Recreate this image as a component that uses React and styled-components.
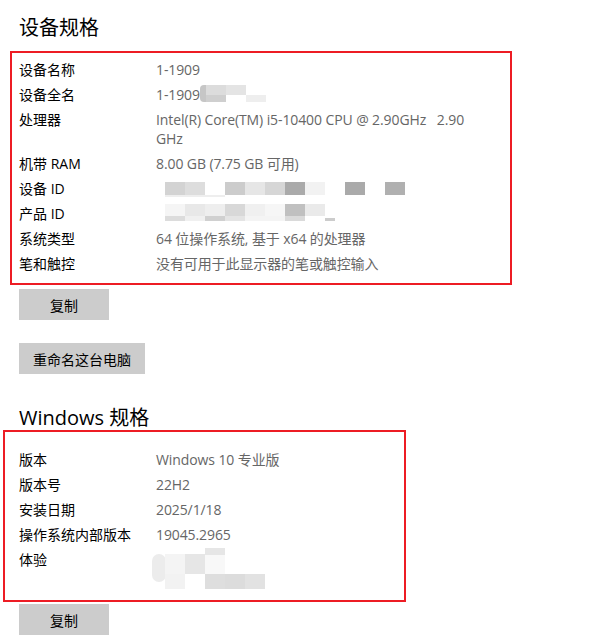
import React from 'react';
import styled, { createGlobalStyle } from 'styled-components';

const GlobalStyle = createGlobalStyle`
  body {
    margin: 0;
    background: #ffffff;
    font-family: 'Open Sans', 'Noto Sans CJK SC', sans-serif;
    font-size: 14px;
    color: #000000;
  }
`;

const Page = styled.div`
  width: 592px;
  height: 641px;
  box-sizing: border-box;
  padding: 14px 0 0 19px;
  overflow: hidden;
`;

const Heading = styled.h2`
  margin: ${(p) => p.margin};
  font-size: 20px;
  font-weight: 400;
  line-height: ${(p) => p.lh}px;
  color: #000000;
`;

const Frame = styled.div`
  box-sizing: border-box;
  width: ${(p) => p.w}px;
  margin-left: ${(p) => p.shift}px;
  padding: ${(p) => p.pad};
  border: 2px solid #ed1c24;
  display: flex;
  flex-direction: column;
  gap: 6px;
`;

const Row = styled.div`
  display: flex;
  align-items: flex-start;
  line-height: 19px;
`;

const Label = styled.div`
  flex: 0 0 137px;
  color: #000000;
  white-space: nowrap;
`;

const Value = styled.div`
  max-width: 322px;
  color: #666666;
  display: flex;
  align-items: flex-start;
  letter-spacing: -0.1px;
`;

const Button = styled.button`
  display: block;
  height: 31px;
  min-width: 90px;
  margin-top: ${(p) => p.top}px;
  padding: 0 14px;
  border: none;
  background: #cccccc;
  color: #000000;
  font-family: inherit;
  font-size: 14px;
`;

const Blur = styled.svg`
  display: block;
  flex: none;
  overflow: visible;
`;

// redaction mosaic: [x, y, w, h, fill, radius]
const fullNameBlocks = [
  [0, 0, 10, 17, '#c6c6c6', 4],
  [6, 0, 20, 10, '#dcdcdc'],
  [6, 10, 20, 7, '#cfcfcf'],
  [26, 0, 20, 10, '#e4e4e4'],
  [46, 10, 20, 7, '#eeeeee'],
];

const deviceIdBlocks = [
  [9, 3, 20, 13, '#d3d3d3'],
  [29, 3, 20, 13, '#dddddd'],
  [69, 3, 20, 13, '#cccccc'],
  [89, 3, 20, 13, '#e6e6e6'],
  [109, 3, 20, 13, '#d6d6d6'],
  [129, 3, 20, 13, '#aaaaaa'],
  [149, 3, 20, 13, '#f2f2f2'],
  [189, 3, 20, 13, '#aaaaaa'],
  [229, 3, 20, 13, '#b0b0b0'],
  [9, 16, 60, 2, '#eeeeee'],
];

const productIdBlocks = [
  [9, 0, 20, 12, '#f5f5f5'],
  [29, 0, 20, 12, '#e8e8e8'],
  [49, 0, 20, 12, '#eeeeee'],
  [69, 0, 20, 12, '#d8d8d8'],
  [89, 0, 20, 12, '#f0f0f0'],
  [109, 0, 20, 12, '#f6f6f6'],
  [129, 0, 20, 12, '#c0c0c0'],
  [149, 0, 20, 12, '#eaeaea'],
  [9, 12, 20, 5, '#dcdcdc'],
  [29, 12, 20, 5, '#f0f0f0'],
  [49, 12, 20, 5, '#d0d0d0'],
  [69, 12, 20, 5, '#e4e4e4'],
  [89, 12, 40, 5, '#f4f4f4'],
  [129, 12, 20, 5, '#dadada'],
  [169, 14, 10, 3, '#cccccc'],
];

const experienceBlocks = [
  [-4, 4, 14, 28, '#ececec', 7],
  [9, 4, 20, 20, '#f4f4f4'],
  [29, 4, 20, 20, '#e6e6e6'],
  [49, -2, 20, 7, '#e6e6e6'],
  [49, 5, 20, 19, '#f8f8f8'],
  [9, 24, 20, 15, '#f2f2f2'],
  [49, 24, 20, 15, '#dedede'],
  [69, 24, 20, 15, '#dcdcdc'],
  [89, 24, 20, 15, '#e2e2e2'],
];

const Mosaic = ({ blocks, width, height }) => (
  <Blur width={width} height={height} viewBox={`0 0 ${width} ${height}`}>
    {blocks.map(([x, y, w, h, fill, r]) => (
      <rect key={`${x}-${y}`} x={x} y={y} width={w} height={h} fill={fill} rx={r || 0} />
    ))}
  </Blur>
);

const deviceSpecs = [
  { label: '设备名称', value: '1-1909' },
  { label: '设备全名', value: '1-1909', blur: fullNameBlocks, bw: 70 },
  { label: '处理器', value: 'Intel(R) Core(TM) i5-10400 CPU @ 2.90GHz   2.90 GHz' },
  { label: '机带 RAM', value: '8.00 GB (7.75 GB 可用)' },
  { label: '设备 ID', blur: deviceIdBlocks, bw: 250 },
  { label: '产品 ID', blur: productIdBlocks, bw: 180 },
  { label: '系统类型', value: '64 位操作系统, 基于 x64 的处理器' },
  { label: '笔和触控', value: '没有可用于此显示器的笔或触控输入' },
];

const windowsSpecs = [
  { label: '版本', value: 'Windows 10 专业版' },
  { label: '版本号', value: '22H2' },
  { label: '安装日期', value: '2025/1/18' },
  { label: '操作系统内部版本', value: '19045.2965' },
  { label: '体验', blur: experienceBlocks, bw: 110 },
];

const SpecRow = ({ label, value, blur, bw }) => (
  <Row>
    <Label>{label}</Label>
    <Value>
      {value && <span style={{ whiteSpace: 'pre-wrap' }}>{value}</span>}
      {blur && <Mosaic blocks={blur} width={bw} height={19} />}
    </Value>
  </Row>
);

const App = () => (
  <>
    <GlobalStyle />
    <Page>
      <Heading margin="0 0 9px" lh={28}>设备规格</Heading>
      <Frame w={502} shift={-9} pad="7px 0 10px 7px">
        {deviceSpecs.map((s) => (
          <SpecRow key={s.label} {...s} />
        ))}
      </Frame>
      <Button top={4}>复制</Button>
      <Button top={23}>重命名这台电脑</Button>
      <Heading margin="32px 0 0" lh={24}>Windows 规格</Heading>
      <Frame w={403} shift={-16} pad="18px 0 31px 14px">
        {windowsSpecs.map((s) => (
          <SpecRow key={s.label} {...s} />
        ))}
      </Frame>
      <Button top={2}>复制</Button>
    </Page>
  </>
);

export default App;
